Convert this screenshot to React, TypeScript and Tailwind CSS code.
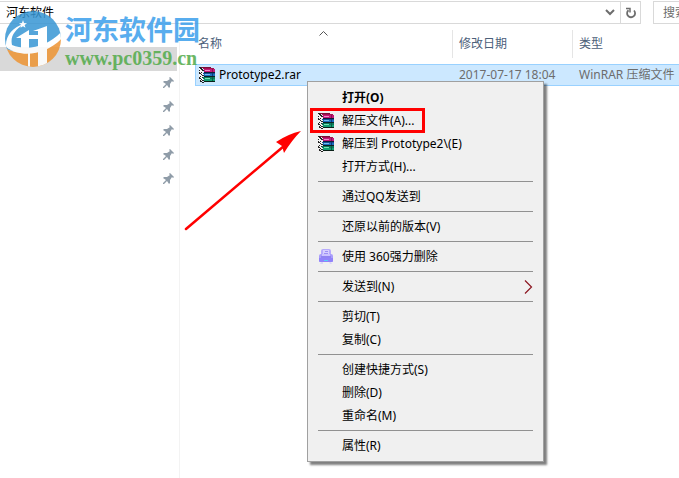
import type { ReactNode } from "react";

interface MenuEntry {
    label: string;
    icon?: ReactNode;
    bold?: boolean;
    submenu?: boolean;
    highlighted?: boolean;
}

function ArchiveIcon() {
    return (
        <svg width="16" height="16" viewBox="0 0 16 16" shapeRendering="crispEdges" className="shrink-0" aria-hidden="true">
            <path d="M0 1h3v1h1v12H3v1H2v-1H1v-1H0z" fill="#f4f4f4" />
            <path d="M0 0h2v1h1v1h1v1h1v1H3V3H2V2H1V1H0zM0 5h1v1h1v1h1v1h2v1H3V8H2V7H0zM0 10h1v1h1v1h1v1h2v1H3v-1H2v-1H0zM0 3h1v1H0zM2 5h1v1H2zM1 9h1v1H1zM3 10h1v1H3zM1 13h1v1h1v1h2v1H3v-1H1z" fill="#222" />
            <path d="M2 0h10v1h3v1H5V1H2z" fill="#7c0f3a" />
            <path d="M4 1h11v1H4z" fill="#a3124f" />
            <path d="M5 2h11v3H5z" fill="#c2187a" />
            <path d="M6 3h5v1H6z" fill="#f08cc6" />
            <path d="M13 2h1v3h-1z" fill="#8a1050" />
            <path d="M5 5h11v1H5z" fill="#101c38" />
            <path d="M4 6h12v1H4z" fill="#124f94" />
            <path d="M5 7h11v2H5z" fill="#1a70be" />
            <path d="M6 7h5v1H6z" fill="#72baf0" />
            <path d="M13 6h1v3h-1z" fill="#0b3880" />
            <path d="M5 9h11v1H5z" fill="#0c2024" />
            <path d="M4 10h12v2H4z" fill="#0a7a58" />
            <path d="M5 12h11v2H5z" fill="#12a074" />
            <path d="M6 11h5v1H6z" fill="#76e2b4" />
            <path d="M13 10h1v4h-1z" fill="#046046" />
            <path d="M5 14h11v1H5z" fill="#0a2018" />
        </svg>
    );
}

function ShredderIcon() {
    return (
        <svg width="16" height="16" viewBox="0 0 16 16" className="shrink-0" aria-hidden="true">
            <path d="M3 2a2 2 0 0 1 2-2h6a2 2 0 0 1 2 2v7H3z" fill="#b7abfc" />
            <path d="M5 1h6v6H5z" fill="#d6cfff" />
            <path d="M7 2h3v1H7zM6 4h4v1H6z" fill="#9d90f4" />
            <rect x="1" y="5" width="14" height="8" rx="2" fill="#a99dfb" />
            <path d="M4 5h8v2H4z" fill="#cbc3ff" />
            <path d="M3 7h10v2H3z" fill="#9083f2" />
            <path d="M1 9h14v3a1 1 0 0 1-1 1H2a1 1 0 0 1-1-1z" fill="#9183fa" />
            <path d="M6 11h4v1H6z" fill="#5acdf8" />
            <path d="M3 13h2v2H2zM11 13h2l1 2h-2z" fill="#dcd7f6" />
        </svg>
    );
}

function PinIcon() {
    return (
        <svg width="12" height="12" viewBox="0 0 12 12" aria-hidden="true">
            <path d="M7 0l4 4-1 1-1-1-2 3 0 3-1 1-2-3-3 3-1 0 0-1 3-3-3-2 1-1 3 0 3-2-1-1z" fill="#8f9ca8" />
        </svg>
    );
}

function WatermarkLogo() {
    return (
        <svg width="58" height="58" viewBox="0 0 58 58" className="shrink-0" aria-hidden="true">
            <defs>
                <clipPath id="logo-disc">
                    <circle cx="29" cy="29" r="28" />
                </clipPath>
            </defs>
            <g clipPath="url(#logo-disc)">
                <path d="M0 0h58v26C46 40 18 46 0 38z" fill="#3796d4" />
                <path d="M0 38c20 10 42 3 58-12v34H0z" fill="#ee9433" />
                <path d="M2 37c-1-11 7-20 18-23C11 20 6 26 8 35c17 7 38 0 51-15v7C45 43 19 50 2 37z" fill="#fff" />
                <path d="M12 28l13-8v21h-8V28z" fill="#fff" />
                <path d="M29 21l14-5v24h-9V29h-9v-4h9v-4z" fill="#fff" />
                <path d="M24 42h2v16h-2zM34 40h9v18h-9z" fill="#fff" />
            </g>
            <path d="M19 10l1 3 3 .3-2.400 1.700.900 2.800-2.500-1.600-2.500 1.600.900-2.800-2.400-1.700 3-.3z" fill="#fff" />
        </svg>
    );
}

const menuGroups: MenuEntry[][] = [
    [
        { label: "打开(O)", bold: true },
        { label: "解压文件(A)...", icon: <ArchiveIcon />, highlighted: true },
        { label: "解压到 Prototype2\\(E)", icon: <ArchiveIcon /> },
        { label: "打开方式(H)..." },
    ],
    [{ label: "通过QQ发送到" }],
    [{ label: "还原以前的版本(V)" }],
    [{ label: "使用 360强力删除", icon: <ShredderIcon /> }],
    [{ label: "发送到(N)", submenu: true }],
    [{ label: "剪切(T)" }, { label: "复制(C)" }],
    [{ label: "创建快捷方式(S)" }, { label: "删除(D)" }, { label: "重命名(M)" }],
    [{ label: "属性(R)" }],
];

function AddressBar() {
    return (
        <div className="flex gap-3 pt-px">
            <div className="flex h-[23px] min-w-0 flex-1 border border-l-0 border-[#d9d9d9]">
                <input aria-label="地址" defaultValue="河东软件" className="min-w-0 flex-1 pl-[6px] text-black outline-none" />
                <button aria-label="展开" className="flex w-5 items-center justify-center">
                    <svg width="10" height="7" viewBox="0 0 10 7" fill="none" stroke="#6d6d6d" strokeWidth="2">
                        <path d="M1 1l4 4 4-4" />
                    </svg>
                </button>
                <button aria-label="刷新" className="flex w-5 items-center justify-center border-l border-[#d9d9d9]">
                    <svg width="12" height="12" viewBox="0 0 12 12" fill="none" stroke="#6d6d6d">
                        <path d="M9 3.500A4 4 0 1 1 3.500 3.200" strokeWidth="1.800" />
                        <path d="M1 1.500h4v4" strokeWidth="1.500" />
                    </svg>
                </button>
            </div>
            <input
                aria-label="搜索"
                placeholder="搜索"
                className="h-[23px] w-[26px] shrink-0 border border-r-0 border-[#d9d9d9] pl-[9px] outline-none placeholder:text-[#6d6d6d]"
            />
        </div>
    );
}

function Sidebar() {
    return (
        <nav className="w-[180px] shrink-0 border-r border-[#f3f3f3] pt-[23px]">
            <div className="mr-[2px] h-6 bg-[#d9d9d9]" />
            <ul>
                {[0, 1, 2, 3, 4].map((row) => (
                    <li key={row} className="flex h-6 items-center justify-end pr-1">
                        <PinIcon />
                    </li>
                ))}
            </ul>
        </nav>
    );
}

function FileTable() {
    return (
        <main className="min-w-0 flex-1 overflow-hidden pl-[15px]">
            <table className="w-full table-fixed border-separate border-spacing-0 whitespace-nowrap">
                <thead className="text-left text-[#4c607a]">
                    <tr>
                        <th className="w-[258px] p-0 pb-[6px] pt-[6px] font-normal">
                            <div className="grid h-[28px] grid-cols-[1fr_auto_1fr] items-center border-r border-[#e5e5e5]">
                                <span className="pl-[3px]">名称</span>
                                <svg width="9" height="5" viewBox="0 0 9 5" fill="none" stroke="#555" className="mt-px self-start">
                                    <path d="M.5 4.5l4-4 4 4" />
                                </svg>
                            </div>
                        </th>
                        <th className="w-[120px] p-0 font-normal">
                            <div className="flex h-[28px] items-center border-r border-[#e5e5e5] pl-[6px]">修改日期</div>
                        </th>
                        <th className="p-0 font-normal">
                            <div className="flex h-[28px] items-center pl-[6px]">类型</div>
                        </th>
                    </tr>
                </thead>
                <tbody>
                    <tr className="bg-[#cce8ff] text-[#6d6d6d]">
                        <td className="border-y border-l border-[#99d1ff] p-0">
                            <div className="flex h-5 items-center gap-1 pl-[3px] text-black">
                                <ArchiveIcon />
                                Prototype2.rar
                            </div>
                        </td>
                        <td className="border-y border-[#99d1ff] p-0 pl-[6px]">2017-07-17 18:04</td>
                        <td className="border-y border-[#99d1ff] p-0 pl-[6px]">WinRAR 压缩文件</td>
                    </tr>
                </tbody>
            </table>
        </main>
    );
}

function ContextMenu() {
    return (
        <div
            role="menu"
            className="absolute left-[307px] top-[81px] w-[237px] border border-[#a0a0a0] bg-[#f0f0f0] py-1 text-black shadow-[3px_3px_2px_rgba(0,0,0,0.5)]"
        >
            {menuGroups.map((group, index) => (
                <div key={group[0].label}>
                    {index > 0 && <hr className="mx-[10px] my-[3px] border-[#919191]" />}
                    {group.map((entry) => (
                        <button
                            key={entry.label}
                            role="menuitem"
                            className={`relative flex h-[23px] w-full items-center pl-[10px] pr-[10px] ${entry.bold ? "font-bold" : ""}`}
                        >
                            <span className="w-6 shrink-0">{entry.icon}</span>
                            <span className="flex-1 whitespace-nowrap text-left">{entry.label}</span>
                            {entry.submenu && (
                                <svg width="9" height="14" viewBox="0 0 9 14" fill="none" stroke="#8c1620" strokeWidth="1.200">
                                    <path d="M1 .5L7.500 7 1 13.500" />
                                </svg>
                            )}
                            {entry.highlighted && (
                                <span className="absolute -top-px left-[2px] h-[25px] w-[115px] border-3 border-[#ff0000]" />
                            )}
                        </button>
                    ))}
                </div>
            ))}
        </div>
    );
}

export default function App() {
    return (
        <div className="relative flex min-h-screen flex-col overflow-hidden bg-white font-['Noto_Sans','Noto_Sans_CJK_SC',sans-serif] text-[12px] leading-4">
            <AddressBar />
            <div className="flex flex-1">
                <Sidebar />
                <FileTable />
            </div>

            <div className="pointer-events-none absolute left-1 top-[10px] flex items-start opacity-85">
                <WatermarkLogo />
                <div className="pl-[3px] pt-[5px]">
                    <div className="font-['Noto_Sans_CJK_SC',sans-serif] text-[27px] font-bold leading-7 text-[#3c9fec]">河东软件园</div>
                    <div className="pt-[3px] font-['Liberation_Serif',serif] text-[20px] font-bold leading-6 text-[#52ab4a]">www.pc0359.cn</div>
                </div>
            </div>

            <ContextMenu />

            <svg width="118" height="102" viewBox="0 0 118 102" className="pointer-events-none absolute left-[184px] top-[130px]" aria-hidden="true">
                <path d="M2 99L100 16" stroke="#f00" strokeWidth="2.500" strokeLinecap="round" />
                <path d="M117 1Q104 4 92 12l6 4 2 7Q108 10 117 1z" fill="#f00" />
            </svg>
        </div>
    );
}
